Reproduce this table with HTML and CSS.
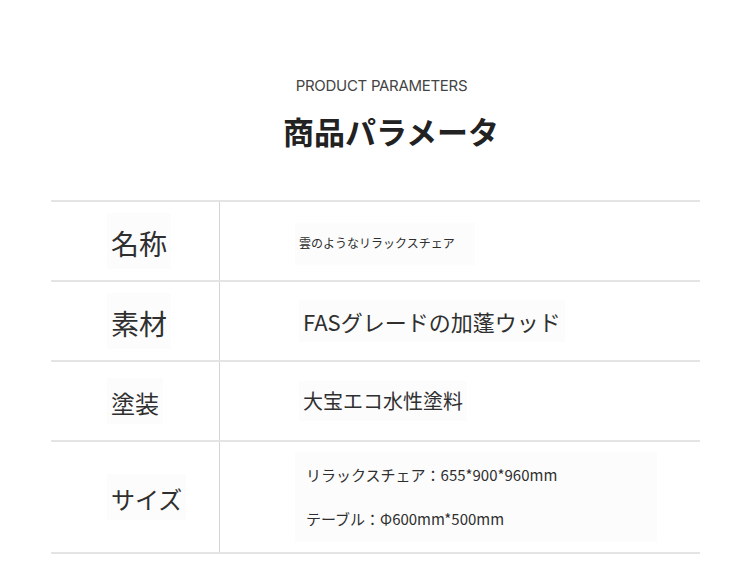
FILE: index.html
```html
<!DOCTYPE html>
<html lang="ja">
<head>
<meta charset="utf-8">
<link rel="stylesheet" href="styles.css">
</head>
<body>
<div class="page">
  <header class="head">
    <div class="eyebrow">PRODUCT PARAMETERS</div>
    <h1 class="title">商品パラメータ</h1>
  </header>
  <div class="table">
    <div class="row r1">
      <div class="label"><span class="chip l28">名称</span></div>
      <div class="value"><span class="chip v11">雲のようなリラックスチェア</span></div>
    </div>
    <div class="row r2">
      <div class="label"><span class="chip l28">素材</span></div>
      <div class="value"><span class="chip v22">FASグレードの加蓬ウッド</span></div>
    </div>
    <div class="row r3">
      <div class="label"><span class="chip l24">塗装</span></div>
      <div class="value"><span class="chip v20">大宝エコ水性塗料</span></div>
    </div>
    <div class="row r4">
      <div class="label"><span class="chip l24">サイズ</span></div>
      <div class="value">
        <div class="chip sizes">
          <p>リラックスチェア：655*900*960mm</p>
          <p>テーブル：Φ600mm*500mm</p>
        </div>
      </div>
    </div>
  </div>
</div>
</body>
</html>
```

FILE: styles.css
```css
html, body {
  margin: 0;
  padding: 0;
  background: #ffffff;
}
body {
  font-family: "Noto Sans CJK JP", "Noto Sans", sans-serif;
  color: #2f2f2f;
}
.page {
  width: 750px;
  height: 585px;
  padding-top: 75px;
  box-sizing: border-box;
}
.head {
  text-align: center;
}
.eyebrow {
  font-family: "Inter", "Noto Sans", sans-serif;
  font-size: 15px;
  line-height: 22px;
  color: #444444;
  letter-spacing: -0.3px;
  padding-left: 13px;
}
.title {
  margin: 14px 0 0 0;
  font-size: 31px;
  line-height: 40px;
  font-weight: 700;
  color: #222222;
  padding-left: 32px;
}
.table {
  margin: 49px 50px 0 51px;
  border-top: 2px solid #e4e4e4;
}
.row {
  display: grid;
  grid-template-columns: 169px 1fr;
  border-bottom: 2px solid #e4e4e4;
}
.r1, .r2, .r3 { height: 78px; }
.r4 { height: 110px; }
.label {
  border-right: 1px solid #d4d4d4;
  display: flex;
  align-items: center;
  padding-left: 56px;
}
.value {
  display: flex;
  align-items: center;
  padding-left: 79px;
}
.chip {
  background: #fcfcfc;
  padding: 6px 4px;
  color: #2f2f2f;
}
.l28 { font-size: 28px; line-height: 40px; padding-top: 10px; padding-bottom: 6px; }
.l24 { font-size: 24px; line-height: 34px; padding-top: 8px; padding-bottom: 4px; }
.v11 { font-size: 12px; line-height: 16px; padding: 12px 20px 14px 4px; margin-top: 6px; margin-left: -4px; }
.v22 { font-size: 22px; line-height: 30px; }
.v20 { font-size: 20px; line-height: 28px; }
.sizes {
  font-size: 15px;
  line-height: 20px;
  padding: 13px 100px 13px 11px;
  margin-left: -4px;
}
.sizes p { margin: 0; }
.sizes p + p { margin-top: 24px; }
```
